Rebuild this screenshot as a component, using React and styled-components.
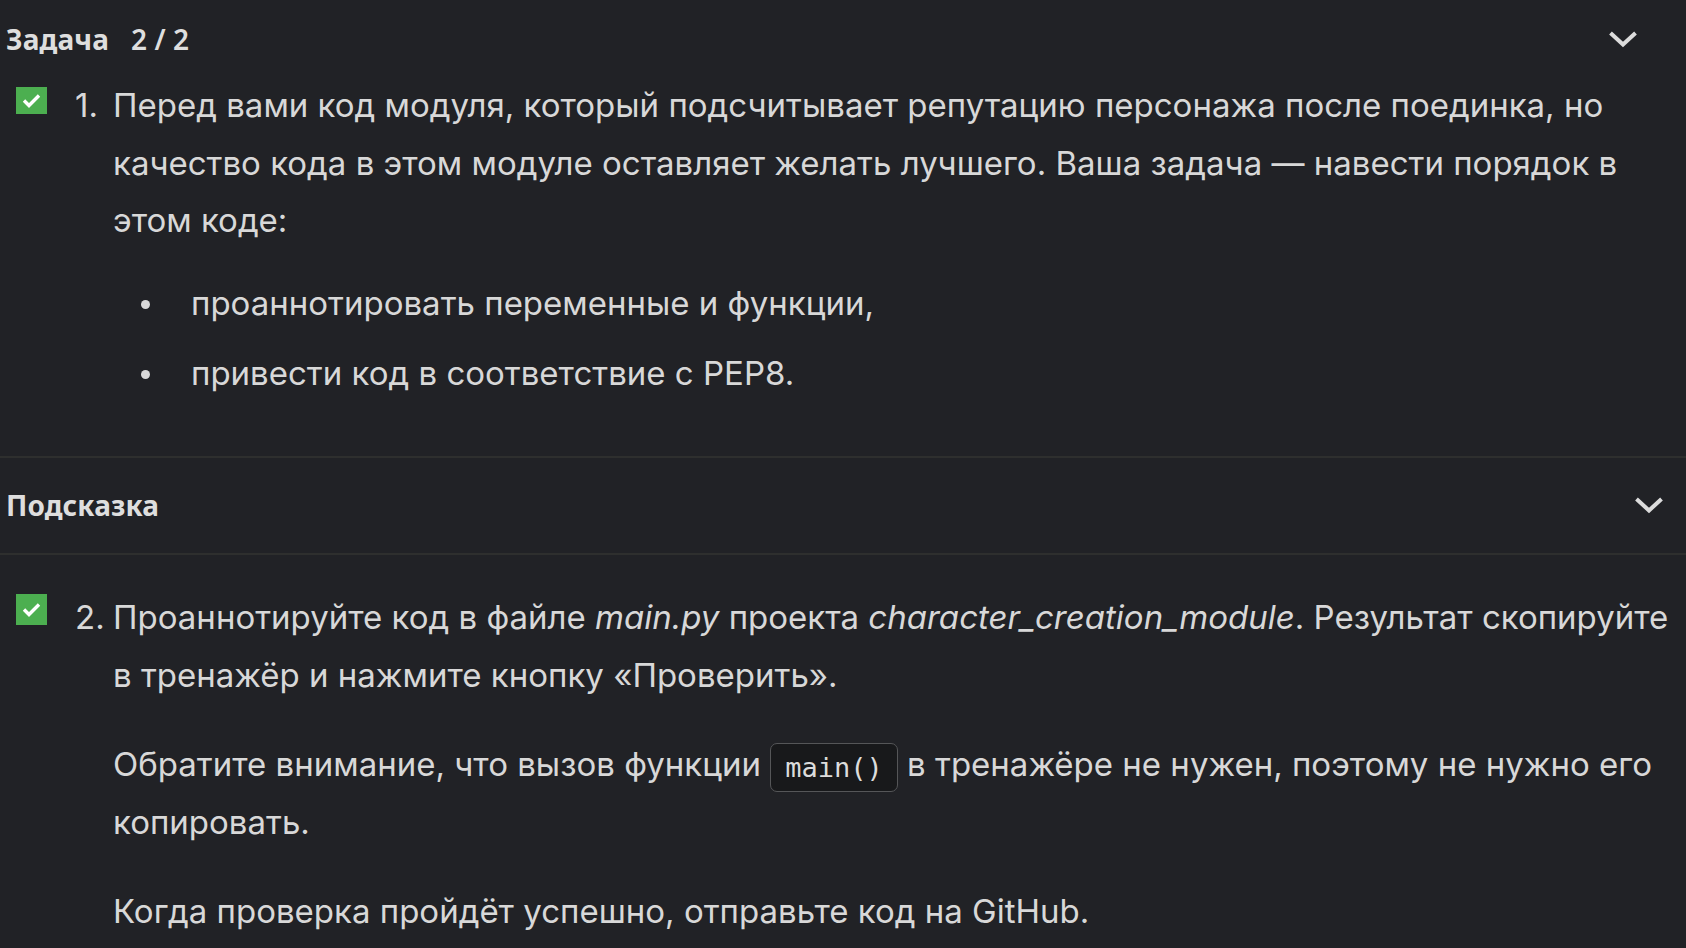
import React from "react";
import styled, { createGlobalStyle } from "styled-components";

const GlobalStyle = createGlobalStyle`
	html, body {
		margin: 0;
		padding: 0;
		background: #212226;
	}
	body {
		font-family: "Noto Sans", "Open Sans", sans-serif;
		color: #d8d8d8;
		overflow: hidden;
	}
`;

function Chevron() {
	return (
		<svg width="30" height="18" viewBox="0 0 30 18" fill="none">
			<path
				d="M2.5 3 L15 14.5 L27.5 3"
				stroke="#dcdcdc"
				strokeWidth="4"
				strokeLinecap="butt"
				strokeLinejoin="miter"
			/>
		</svg>
	);
}

function Check({ short }) {
	return (
		<StyledCheck $short={short}>
			<svg width="19" height="15" viewBox="0 0 19 15" fill="none">
				<path d="M2 7.5 L7 12.5 L17 2.5" stroke="#fff" strokeWidth="3.4" />
			</svg>
		</StyledCheck>
	);
}

function App() {
	return (
		<>
			<GlobalStyle />
			<StyledPage>
				<StyledHeader $right={48}>
					<StyledTitle>
						Задача<StyledCounter>2 / 2</StyledCounter>
					</StyledTitle>
					<Chevron />
				</StyledHeader>

				<StyledTask $bottom={53}>
					<Check short />
					<StyledNumber>1.</StyledNumber>
					<StyledContent>
						<StyledText>
							Перед вами код модуля, который подсчитывает репутацию персонажа
							после поединка, но качество кода в этом модуле оставляет желать
							лучшего. Ваша задача — навести порядок в этом коде:
						</StyledText>
						<StyledList>
							<li>проаннотировать переменные и функции,</li>
							<li>привести код в соответствие с PEP8.</li>
						</StyledList>
					</StyledContent>
				</StyledTask>

				<StyledHint>
					<StyledTitle>Подсказка</StyledTitle>
					<Chevron />
				</StyledHint>

				<StyledTask $top={34}>
					<Check />
					<StyledNumber>2.</StyledNumber>
					<StyledContent>
						<StyledText>
							Проаннотируйте код в файле <em>main.py</em> проекта{" "}
							<em>character_creation_module</em>. Результат скопируйте в
							тренажёр и нажмите кнопку «Проверить».
						</StyledText>
						<StyledText>
							Обратите внимание, что вызов функции <StyledCode>main()</StyledCode>{" "}
							в тренажёре не нужен, поэтому не нужно его копировать.
						</StyledText>
						<StyledText>
							Когда проверка пройдёт успешно, отправьте код на GitHub.
						</StyledText>
					</StyledContent>
				</StyledTask>
			</StyledPage>
		</>
	);
}

export default App;

const StyledPage = styled.div`
	display: flex;
	flex-direction: column;
	width: 1686px;
	height: 948px;
	background: #212226;
`;

const StyledHeader = styled.div`
	display: flex;
	align-items: center;
	justify-content: space-between;
	height: 77px;
	padding: 0 ${(p) => p.$right}px 0 6px;
	box-sizing: border-box;
`;

const StyledTitle = styled.div`
	font-size: 28px;
	font-weight: 700;
	color: #dedede;
	letter-spacing: 0.1px;
`;

const StyledCounter = styled.span`
	margin-left: 22px;
	font-weight: 600;
`;

const StyledTask = styled.div`
	display: flex;
	align-items: flex-start;
	padding: ${(p) => p.$top || 0}px 10px ${(p) => p.$bottom || 0}px 16px;
	font-family: Inter, "Noto Sans", sans-serif;
	font-size: 33px;
	line-height: 57.6px;
`;

const StyledCheck = styled.div`
	display: flex;
	align-items: center;
	justify-content: center;
	flex: none;
	width: 31px;
	height: ${(p) => (p.$short ? 27 : 31)}px;
	margin-top: ${(p) => (p.$short ? 10 : 5)}px;
	background: #4caf50;
`;

const StyledNumber = styled.div`
	width: 38px;
	margin-left: 28px;
	flex: none;
`;

const StyledContent = styled.div`
	flex: 1;
	display: flex;
	flex-direction: column;
	gap: 32px;
`;

const StyledText = styled.p`
	margin: 0;

	em {
		font-style: italic;
	}
`;

const StyledList = styled.ul`
	list-style: none;
	margin: -7px 0 0;
	padding: 0;
	display: flex;
	flex-direction: column;
	gap: 13px;

	li {
		position: relative;
		padding-left: 78px;
	}

	li::before {
		content: "";
		position: absolute;
		left: 28px;
		top: 25px;
		width: 9px;
		height: 9px;
		border-radius: 50%;
		background: #d8d8d8;
	}
`;

const StyledHint = styled.div`
	display: flex;
	align-items: center;
	justify-content: space-between;
	height: 95px;
	padding: 0 22px 0 6px;
	border-top: 2px solid #2e2f2e;
	border-bottom: 2px solid #2e2f2e;
`;

const StyledCode = styled.code`
	display: inline-block;
	font-family: "DejaVu Sans Mono", "Liberation Mono", monospace;
	font-size: 27px;
	line-height: 33px;
	padding: 7px 14px;
	border: 1.5px solid #555658;
	border-radius: 7px;
	background: #18191b;
	color: #dcdcdc;
	vertical-align: middle;
`;
